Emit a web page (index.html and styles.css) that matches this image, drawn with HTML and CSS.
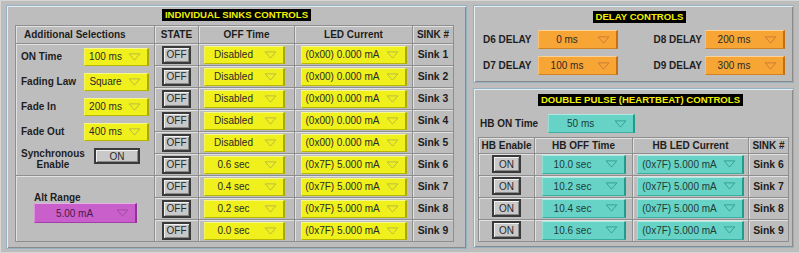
FILE: index.html
```html
<!DOCTYPE html>
<html>
<head>
    <meta charset="utf-8" />
    <title>Sink Controls</title>
    <link rel="stylesheet" href="styles.css">
</head>
<body>
<div class="screen">
    <!-- individual sinks -->
    <div class="panel panel-sinks">
        <div class="title-row"><span class="title">INDIVIDUAL SINKS CONTROLS</span></div>
        <table class="grid sinks">
            <tr class="head">
                <th class="col-sel left">Additional Selections</th>
                <th class="col-state">STATE</th>
                <th class="col-off">OFF Time</th>
                <th class="col-led">LED Current</th>
                <th class="col-sink">SINK #</th>
            </tr>
            <tr>
                <td rowspan="6" class="sel-cell">
                    <div class="sel-row"><span class="lbl">ON Time</span><div class="ring yellow w-sel"><span class="val">100 ms</span><svg class="arrow" viewBox="0 0 14 9"><path d="M1 1 H13 L7 8 Z"/></svg></div></div>
                    <div class="sel-row"><span class="lbl">Fading Law</span><div class="ring yellow w-sel"><span class="val">Square</span><svg class="arrow" viewBox="0 0 14 9"><path d="M1 1 H13 L7 8 Z"/></svg></div></div>
                    <div class="sel-row"><span class="lbl">Fade In</span><div class="ring yellow w-sel"><span class="val">200 ms</span><svg class="arrow" viewBox="0 0 14 9"><path d="M1 1 H13 L7 8 Z"/></svg></div></div>
                    <div class="sel-row"><span class="lbl">Fade Out</span><div class="ring yellow w-sel"><span class="val">400 ms</span><svg class="arrow" viewBox="0 0 14 9"><path d="M1 1 H13 L7 8 Z"/></svg></div></div>
                    <div class="sel-row sync"><span class="lbl two">Synchronous<br>Enable</span><button class="btn btn-wide">ON</button></div>
                </td>
                <td><button class="btn">OFF</button></td>
                <td><div class="ring yellow w-off"><span class="val">Disabled</span><svg class="arrow" viewBox="0 0 14 9"><path d="M1 1 H13 L7 8 Z"/></svg></div></td>
                <td><div class="ring yellow w-led"><span class="val">(0x00) 0.000 mA</span><svg class="arrow" viewBox="0 0 14 9"><path d="M1 1 H13 L7 8 Z"/></svg></div></td>
                <td class="sink">Sink 1</td>
            </tr>
            <tr>
                <td><button class="btn">OFF</button></td>
                <td><div class="ring yellow w-off"><span class="val">Disabled</span><svg class="arrow" viewBox="0 0 14 9"><path d="M1 1 H13 L7 8 Z"/></svg></div></td>
                <td><div class="ring yellow w-led"><span class="val">(0x00) 0.000 mA</span><svg class="arrow" viewBox="0 0 14 9"><path d="M1 1 H13 L7 8 Z"/></svg></div></td>
                <td class="sink">Sink 2</td>
            </tr>
            <tr>
                <td><button class="btn">OFF</button></td>
                <td><div class="ring yellow w-off"><span class="val">Disabled</span><svg class="arrow" viewBox="0 0 14 9"><path d="M1 1 H13 L7 8 Z"/></svg></div></td>
                <td><div class="ring yellow w-led"><span class="val">(0x00) 0.000 mA</span><svg class="arrow" viewBox="0 0 14 9"><path d="M1 1 H13 L7 8 Z"/></svg></div></td>
                <td class="sink">Sink 3</td>
            </tr>
            <tr>
                <td><button class="btn">OFF</button></td>
                <td><div class="ring yellow w-off"><span class="val">Disabled</span><svg class="arrow" viewBox="0 0 14 9"><path d="M1 1 H13 L7 8 Z"/></svg></div></td>
                <td><div class="ring yellow w-led"><span class="val">(0x00) 0.000 mA</span><svg class="arrow" viewBox="0 0 14 9"><path d="M1 1 H13 L7 8 Z"/></svg></div></td>
                <td class="sink">Sink 4</td>
            </tr>
            <tr>
                <td><button class="btn">OFF</button></td>
                <td><div class="ring yellow w-off"><span class="val">Disabled</span><svg class="arrow" viewBox="0 0 14 9"><path d="M1 1 H13 L7 8 Z"/></svg></div></td>
                <td><div class="ring yellow w-led"><span class="val">(0x00) 0.000 mA</span><svg class="arrow" viewBox="0 0 14 9"><path d="M1 1 H13 L7 8 Z"/></svg></div></td>
                <td class="sink">Sink 5</td>
            </tr>
            <tr>
                <td><button class="btn">OFF</button></td>
                <td><div class="ring yellow w-off"><span class="val">0.6 sec</span><svg class="arrow" viewBox="0 0 14 9"><path d="M1 1 H13 L7 8 Z"/></svg></div></td>
                <td><div class="ring yellow w-led"><span class="val">(0x7F) 5.000 mA</span><svg class="arrow" viewBox="0 0 14 9"><path d="M1 1 H13 L7 8 Z"/></svg></div></td>
                <td class="sink">Sink 6</td>
            </tr>
            <tr>
                <td rowspan="3" class="alt-cell">
                    <div class="alt-box">
                        <span class="lbl">Alt Range</span>
                        <div class="ring purple w-alt"><span class="val">5.00 mA</span><svg class="arrow" viewBox="0 0 14 9"><path d="M1 1 H13 L7 8 Z"/></svg></div>
                    </div>
                </td>
                <td><button class="btn">OFF</button></td>
                <td><div class="ring yellow w-off"><span class="val">0.4 sec</span><svg class="arrow" viewBox="0 0 14 9"><path d="M1 1 H13 L7 8 Z"/></svg></div></td>
                <td><div class="ring yellow w-led"><span class="val">(0x7F) 5.000 mA</span><svg class="arrow" viewBox="0 0 14 9"><path d="M1 1 H13 L7 8 Z"/></svg></div></td>
                <td class="sink">Sink 7</td>
            </tr>
            <tr>
                <td><button class="btn">OFF</button></td>
                <td><div class="ring yellow w-off"><span class="val">0.2 sec</span><svg class="arrow" viewBox="0 0 14 9"><path d="M1 1 H13 L7 8 Z"/></svg></div></td>
                <td><div class="ring yellow w-led"><span class="val">(0x7F) 5.000 mA</span><svg class="arrow" viewBox="0 0 14 9"><path d="M1 1 H13 L7 8 Z"/></svg></div></td>
                <td class="sink">Sink 8</td>
            </tr>
            <tr>
                <td><button class="btn">OFF</button></td>
                <td><div class="ring yellow w-off"><span class="val">0.0 sec</span><svg class="arrow" viewBox="0 0 14 9"><path d="M1 1 H13 L7 8 Z"/></svg></div></td>
                <td><div class="ring yellow w-led"><span class="val">(0x7F) 5.000 mA</span><svg class="arrow" viewBox="0 0 14 9"><path d="M1 1 H13 L7 8 Z"/></svg></div></td>
                <td class="sink">Sink 9</td>
            </tr>
        </table>
    </div>

    <div class="side">
        <!-- delays -->
        <div class="panel panel-delay">
            <div class="title-row"><span class="title">DELAY CONTROLS</span></div>
            <div class="delay-grid">
                <span class="lbl">D6 DELAY</span>
                <div class="ring orange w-delay"><span class="val">0 ms</span><svg class="arrow" viewBox="0 0 14 9"><path d="M1 1 H13 L7 8 Z"/></svg></div>
                <span class="lbl lbl-right">D8 DELAY</span>
                <div class="ring orange w-delay"><span class="val">200 ms</span><svg class="arrow" viewBox="0 0 14 9"><path d="M1 1 H13 L7 8 Z"/></svg></div>
                <span class="lbl">D7 DELAY</span>
                <div class="ring orange w-delay"><span class="val">100 ms</span><svg class="arrow" viewBox="0 0 14 9"><path d="M1 1 H13 L7 8 Z"/></svg></div>
                <span class="lbl lbl-right">D9 DELAY</span>
                <div class="ring orange w-delay"><span class="val">300 ms</span><svg class="arrow" viewBox="0 0 14 9"><path d="M1 1 H13 L7 8 Z"/></svg></div>
            </div>
        </div>

        <!-- heartbeat -->
        <div class="panel panel-hb">
            <div class="title-row"><span class="title">DOUBLE PULSE (HEARTBEAT) CONTROLS</span></div>
            <div class="hb-on">
                <span class="lbl">HB ON Time</span>
                <div class="ring teal w-hbon"><span class="val">50 ms</span><svg class="arrow" viewBox="0 0 14 9"><path d="M1 1 H13 L7 8 Z"/></svg></div>
            </div>
            <table class="grid hb">
                <tr class="head">
                    <th class="col-hben">HB Enable</th>
                    <th class="col-hboff">HB OFF Time</th>
                    <th class="col-hbled">HB LED Current</th>
                    <th class="col-hbsink">SINK #</th>
                </tr>
                <tr>
                    <td><button class="btn">ON</button></td>
                    <td><div class="ring teal w-hboff"><span class="val">10.0 sec</span><svg class="arrow" viewBox="0 0 14 9"><path d="M1 1 H13 L7 8 Z"/></svg></div></td>
                    <td><div class="ring teal w-hbled"><span class="val">(0x7F) 5.000 mA</span><svg class="arrow" viewBox="0 0 14 9"><path d="M1 1 H13 L7 8 Z"/></svg></div></td>
                    <td class="sink">Sink 6</td>
                </tr>
                <tr>
                    <td><button class="btn">ON</button></td>
                    <td><div class="ring teal w-hboff"><span class="val">10.2 sec</span><svg class="arrow" viewBox="0 0 14 9"><path d="M1 1 H13 L7 8 Z"/></svg></div></td>
                    <td><div class="ring teal w-hbled"><span class="val">(0x7F) 5.000 mA</span><svg class="arrow" viewBox="0 0 14 9"><path d="M1 1 H13 L7 8 Z"/></svg></div></td>
                    <td class="sink">Sink 7</td>
                </tr>
                <tr>
                    <td><button class="btn">ON</button></td>
                    <td><div class="ring teal w-hboff"><span class="val">10.4 sec</span><svg class="arrow" viewBox="0 0 14 9"><path d="M1 1 H13 L7 8 Z"/></svg></div></td>
                    <td><div class="ring teal w-hbled"><span class="val">(0x7F) 5.000 mA</span><svg class="arrow" viewBox="0 0 14 9"><path d="M1 1 H13 L7 8 Z"/></svg></div></td>
                    <td class="sink">Sink 8</td>
                </tr>
                <tr>
                    <td><button class="btn">ON</button></td>
                    <td><div class="ring teal w-hboff"><span class="val">10.6 sec</span><svg class="arrow" viewBox="0 0 14 9"><path d="M1 1 H13 L7 8 Z"/></svg></div></td>
                    <td><div class="ring teal w-hbled"><span class="val">(0x7F) 5.000 mA</span><svg class="arrow" viewBox="0 0 14 9"><path d="M1 1 H13 L7 8 Z"/></svg></div></td>
                    <td class="sink">Sink 9</td>
                </tr>
            </table>
        </div>
    </div>
</div>
</body>
</html>
```

FILE: styles.css
```css
:root {
	--bg: #bdbdbd;
	--line-dark: #8e8e8e;
	--line-light: #e2e2e2;
	--frame: #93b3c2;
}

html, body {
	margin: 0;
	padding: 0;
}

body {
	width: 800px;
	height: 253px;
	overflow: hidden;
	background: var(--bg);
	font-family: "Liberation Sans", Arial, sans-serif;
	font-size: 10px;
	color: #1e1e1e;
}

.screen {
	display: flex;
	gap: 6px;
	box-sizing: border-box;
	height: 253px;
	padding: 4px 5px 4px 5px;
	border: 1px solid #d6d6d6;
}

.panel {
	box-sizing: border-box;
	border: 1px solid var(--frame);
	box-shadow: inset 1px 1px 0 #e6eef2, inset -1px -1px 0 #8a8a8a;
}

.panel-sinks {
	width: 461px;
	height: 244px;
	padding: 3px 0 0 8px;
}

.side {
	display: flex;
	flex-direction: column;
	gap: 5px;
	width: 321px;
}

.panel-delay {
	height: 78px;
	padding: 5px 0 0 0;
}

.panel-hb {
	height: 161px;
	padding: 5px 0 0 4px;
}

/* yellow-on-black section titles */
.title-row {
	display: flex;
	justify-content: center;
	height: 12px;
}
.panel-sinks .title-row { padding-right: 8px; }
.panel-delay .title-row { padding-left: 12px; }
.panel-hb .title-row { padding-left: 10px; }

.title {
	display: inline-block;
	background: #000;
	color: #f0f000;
	font-weight: bold;
	font-size: 9.6px;
	line-height: 12px;
	padding: 0 3px;
}

.lbl {
	font-weight: bold;
	color: #1e1e1e;
	white-space: nowrap;
}

/* tables */
.grid {
	border-collapse: collapse;
	table-layout: fixed;
}

.grid th, .grid td {
	box-sizing: border-box;
	border: 1px solid var(--line-dark);
	box-shadow: inset 1px 1px 0 var(--line-light);
	padding: 0;
	text-align: center;
	vertical-align: middle;
	font-weight: bold;
}

.sinks { margin-top: 4px; width: 438px; }
.sinks .head th { height: 18px; }
.sinks td { height: 22px; }

.col-sel { width: 139px; }
.col-state { width: 44px; }
.col-off { width: 96px; }
.col-led { width: 118px; }
.col-sink { width: 41px; }

.grid th.left {
	text-align: left;
	padding-left: 8px;
}

.sel-cell {
	vertical-align: top !important;
	padding: 0 5px 0 5px !important;
}

.sel-row {
	display: flex;
	align-items: center;
	justify-content: space-between;
	height: 25px;
}

.sel-row.sync {
	align-items: flex-start;
	height: 28px;
	padding-top: 4px;
	box-sizing: border-box;
}

.sel-row.sync .btn {
	margin-right: 9px;
}

.two {
	text-align: center;
	line-height: 11px;
}

.alt-cell {
	text-align: left !important;
	padding-left: 18px !important;
}

.alt-box {
	display: flex;
	flex-direction: column;
	gap: 0;
	margin-top: -2px;
}

.sink {
	font-size: 10.4px;
}

/* heartbeat */
.hb-on {
	display: flex;
	align-items: center;
	gap: 10px;
	height: 20px;
	margin: 8px 0 3px 2px;
}

.hb { width: 310px; }
.hb .head th { height: 16px; }
.hb td { height: 22px; }

.col-hben { width: 56px; }
.col-hboff { width: 98px; }
.col-hbled { width: 116px; }
.col-hbsink { width: 40px; }

/* delay block */
.delay-grid {
	display: grid;
	grid-template-columns: 55px 80px 87px 80px;
	grid-auto-rows: 19px;
	row-gap: 7px;
	align-items: center;
	margin: 7px 0 0 9px;
}

.lbl-right {
	justify-self: end;
	margin-right: 3px;
}

/* ring (drop-down) controls */
.ring {
	display: inline-flex;
	align-items: center;
	box-sizing: border-box;
	height: 18px;
	vertical-align: middle;
	font-weight: normal;
	color: #2a2a2a;
	border-top: 1px solid rgba(255, 255, 255, 0.5);
	border-left: 1px solid rgba(255, 255, 255, 0.3);
	border-right: 2px solid;
	border-bottom: 1px solid;
}

.ring .val {
	flex: 1;
	text-align: center;
	white-space: nowrap;
}

.arrow {
	width: 13px;
	height: 8px;
	margin: 0 6px 0 2px;
	fill: none;
	stroke-width: 1;
}

.yellow { background: #f0f01c; border-right-color: #a9a900; border-bottom-color: #b8b800; }
.yellow .arrow { stroke: #b4b44a; }

.orange { background: #f7a535; border-right-color: #c57010; border-bottom-color: #d28222; height: 19px; }
.orange .arrow { stroke: #c8783a; }

.teal { background: #66d3c6; border-right-color: #1f9c8c; border-bottom-color: #3aaea0; height: 19px; color: #1f3b38; }
.teal .arrow { stroke: #2f9c90; }

.purple { background: #c95fca; border-right-color: #93309a; border-bottom-color: #a040a6; height: 20px; color: #4a1a4a; }
.purple .arrow { stroke: #9c4aa0; }

.w-sel { width: 65px; }
.w-off { width: 81px; margin-right: 4px; }
.w-led { width: 106px; }
.w-alt { width: 103px; }
.w-delay { width: 80px; }
.w-hbon { width: 87px; }
.w-hboff { width: 84px; }
.w-hbled { width: 107px; }

/* boolean buttons */
.btn {
	box-sizing: border-box;
	width: 29px;
	height: 18px;
	padding: 0;
	background: #c9c9c9;
	border: 2px solid #3a3a3a;
	box-shadow: inset 1px 1px 0 #f2f2f2, inset -1px -1px 0 #8a8a8a;
	font-family: inherit;
	font-size: 10px;
	color: #2a2a2a;
}

.btn-wide {
	width: 46px;
	height: 16px;
}
```
